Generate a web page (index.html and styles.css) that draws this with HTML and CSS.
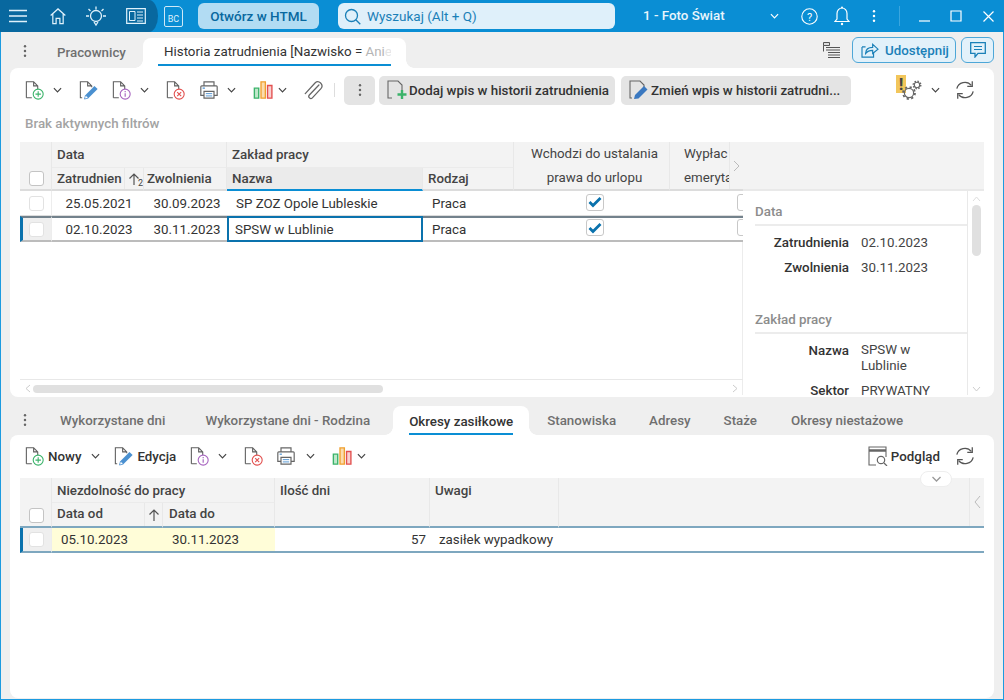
FILE: index.html
```html
<!DOCTYPE html>
<html lang="pl">
<head>
<meta charset="utf-8">
<title>Historia zatrudnienia</title>
<link rel="stylesheet" href="styles.css">
</head>
<body>
<svg class="defs" width="0" height="0">
  <symbol id="doc" viewBox="0 0 22 22"><path d="M1.500 19.500V2h8l4.500 4.500V10M9.500 2v4.500H14M1.500 19.500h6" fill="none" stroke="#5f5f5f" stroke-width="1.200"/></symbol>
  <symbol id="i-new" viewBox="0 0 22 22"><use href="#doc"/><circle cx="14.500" cy="15.500" r="5.500" fill="#fff" stroke="#3bb36a" stroke-width="1.200"/><path d="M14.500 12.500v6M11.500 15.500h6" stroke="#3bb36a" stroke-width="1.200"/></symbol>
  <symbol id="i-edit" viewBox="0 0 22 22"><path d="M3.500 19.500L1.500 19.500V2h8l4.500 4.500V8M9.500 2v4.500H14" fill="none" stroke="#5f5f5f" stroke-width="1.200"/><path d="M6 21l1.200-4.500L17 6.500l3.500 3.500-10 9.800z" fill="#4a90d0"/><path d="M6 21l1.200-4.500 3.200 3.300z" fill="#fff" stroke="#4a90d0" stroke-width=".8"/></symbol>
  <symbol id="i-info" viewBox="0 0 22 22"><use href="#doc"/><circle cx="14.500" cy="15.500" r="5.500" fill="#fff" stroke="#a866c0" stroke-width="1.200"/><path d="M14.500 14.500v4M14.500 12v1.400" stroke="#a866c0" stroke-width="1.300"/></symbol>
  <symbol id="i-del" viewBox="0 0 22 22"><use href="#doc"/><circle cx="14.500" cy="15.500" r="5.500" fill="#fff" stroke="#e2504f" stroke-width="1.200"/><path d="M12.300 13.300l4.400 4.400M16.700 13.300l-4.400 4.400" stroke="#e2504f" stroke-width="1.200"/></symbol>
  <symbol id="i-print" viewBox="0 0 22 22"><path d="M5.500 6.500V2h11v4.500M5.500 17H2V7.500q0-1 1-1h16q1 0 1 1V17h-3.500" fill="none" stroke="#666" stroke-width="1.300"/><path d="M5.500 12.500h11V20h-11z" fill="#fff" stroke="#666" stroke-width="1.300"/><path d="M7.500 15h7M7.500 17.500h7" stroke="#4a90d0"/><path d="M4 9h2.500" stroke="#4a90d0" stroke-width="1.300"/></symbol>
  <symbol id="i-chart" viewBox="0 0 22 22"><path d="M1.500 9h4.800v11H1.500z" fill="#bfe8cb" stroke="#3bb36a" stroke-width="1.500"/><path d="M8.800 2h4.800v18H8.800z" fill="#fbdcae" stroke="#f0a02f" stroke-width="1.500"/><path d="M16 6h4.800v14H16z" fill="#f9d0d0" stroke="#e2504f" stroke-width="1.500"/></symbol>
  <symbol id="i-clip" viewBox="0 0 22 22"><path d="M18 5L7.500 16a2.300 2.300 0 0 0 3.300 3.200L20.200 9a4.500 4.500 0 0 0-6.500-6.200L3 14.500" transform="translate(-.5 .5)" fill="none" stroke="#666" stroke-width="1.400" stroke-linecap="round"/></symbol>
  <symbol id="i-refresh" viewBox="0 0 22 22"><path d="M2 9.500A9 8.500 0 0 1 18 6M20 12.500A9 8.500 0 0 1 4 16" fill="none" stroke="#555" stroke-width="1.400"/><path d="M19 1.500V7h-5.500M3 20.500V15h5.500" fill="none" stroke="#555" stroke-width="1.400"/></symbol>
  <symbol id="i-chev" viewBox="0 0 10 6"><path d="M1 1l4 4 4-4" fill="none" stroke="currentColor" stroke-width="1.300"/></symbol>
  <symbol id="i-dots" viewBox="0 0 4 16"><circle cx="2" cy="2.500" r="1.400"/><circle cx="2" cy="8" r="1.400"/><circle cx="2" cy="13.500" r="1.400"/></symbol>
</svg>
<div class="window">
  <header class="titlebar">
    <div class="tb-dark">
      <svg class="tb-ico" width="18" height="14" viewBox="0 0 18 14"><path d="M0 1.500h18M0 7h18M0 12.500h18" stroke="#dff1fb" stroke-width="1.400"/></svg>
      <svg class="tb-ico" width="16" height="18" viewBox="0 0 17 18"><path d="M.7 8.500L8.500 1.500l7.800 7M3 7v10h3.500v-5.500h4V17H14V7" fill="none" stroke="#dff1fb" stroke-width="1.300"/></svg>
      <svg class="tb-ico" width="22" height="22" viewBox="0 0 22 22"><circle cx="11" cy="11" r="5.500" fill="none" stroke="#dff1fb" stroke-width="1.300"/><path d="M11 1.500v3M3.500 4l2 2M18.500 4l-2 2M1 11h3M18 11h3M9 17l2 3 2-3" fill="none" stroke="#dff1fb" stroke-width="1.300"/></svg>
      <svg class="tb-ico" width="20" height="16" viewBox="0 0 20 16"><path d="M.7.700h18.600v14.600H.7z" fill="none" stroke="#dff1fb" stroke-width="1.200"/><path d="M3.500 3.500h5.500v9H3.500z" fill="none" stroke="#dff1fb"/><path d="M11 4h6M11 7h6M11 10h6M11 13h6" stroke="#dff1fb"/></svg>
    </div>
    <div class="tb-bc">BC</div>
    <button class="html-btn">Otwórz w HTML</button>
    <div class="search">
      <svg width="17" height="17" viewBox="0 0 17 17"><circle cx="7.500" cy="7.500" r="6" fill="none" stroke="#1a80b8" stroke-width="1.300"/><path d="M11.800 11.800l4.500 4.500" stroke="#1a80b8" stroke-width="1.300"/></svg>
      <span>Wyszukaj (Alt + Q)</span>
    </div>
    <div class="company">1 - Foto Świat</div>
    <svg class="company-chev" width="9" height="6"><use href="#i-chev"/></svg>
    <div class="tb-right">
      <svg width="17" height="17" viewBox="0 0 17 17"><circle cx="8.500" cy="8.500" r="7.700" fill="none" stroke="#fff" stroke-width="1.100"/><text x="8.500" y="12.500" class="help-q" text-anchor="middle">?</text></svg>
      <svg width="16" height="20" viewBox="0 0 16 20"><path d="M1 15.500h14l-2-2.500V7.500a5 5.500 0 0 0-10 0V13z" fill="none" stroke="#fff" stroke-width="1.200"/><circle cx="8" cy="18" r="1.200" fill="#fff"/><circle cx="8" cy="1.500" r="1" fill="#fff"/></svg>
      <svg class="dots-white" width="4" height="14"><use href="#i-dots"/></svg>
      <span class="tb-sep"></span>
      <svg width="11" height="11" viewBox="0 0 11 11"><path d="M0 10h11" stroke="#fff" stroke-width="1.200"/></svg>
      <svg width="12" height="12" viewBox="0 0 12 12"><path d="M1 1h10v10H1z" fill="none" stroke="#fff" stroke-width="1.200"/></svg>
      <svg width="11" height="11" viewBox="0 0 11 11"><path d="M.5.500l10 10M10.500.500l-10 10" stroke="#fff" stroke-width="1.200"/></svg>
    </div>
  </header>

  <main class="workspace">
    <div class="tabs tabs-top">
      <svg class="dots" width="4" height="14"><use href="#i-dots"/></svg>
      <div class="tab t-prac">Pracownicy</div>
      <div class="tab tab-active t-hist"><span class="tab-label">Historia zatrudnienia [Nazwisko = <span class="fade">Ani</span><span class="fade2">e</span></span></div>
      <div class="tabs-right">
        <svg width="17" height="16" viewBox="0 0 17 16"><path d="M.5.500h6v3h-6zM.5 3.500v6" fill="#ddd" stroke="#555"/><path d="M3 5.500h14M3 8h14M5 10.500h12M5 13h12M5 15.500h12" stroke="#555"/></svg>
        <button class="share"><svg width="18" height="16" viewBox="0 0 20 18"><path d="M1 5.500h4M1 5.500V17h13v-5" fill="none" stroke="#1a80b8" stroke-width="1.300"/><path d="M5 13c0-5 3-7 8-7V2.500l6 5.500-6 5v-3.500c-4 0-6 1-8 3.500z" fill="none" stroke="#1a80b8" stroke-width="1.300"/></svg>Udostępnij</button>
        <button class="comment"><svg width="16" height="16" viewBox="0 0 16 16"><path d="M.7.700h14.600v10.600H8L5 15v-3.700H.7z" fill="none" stroke="#1a80b8" stroke-width="1.300"/><path d="M4 4.500h8M4 7.500h8" stroke="#1a80b8"/></svg></button>
      </div>
    </div>

    <section class="card card-top">
      <div class="toolbar tb1">
        <svg class="i22"><use href="#i-new"/></svg><svg class="chev"><use href="#i-chev"/></svg>
        <svg class="i22 a-edit"><use href="#i-edit"/></svg>
        <svg class="i22 a-info"><use href="#i-info"/></svg><svg class="chev"><use href="#i-chev"/></svg>
        <svg class="i22 a-del"><use href="#i-del"/></svg>
        <svg class="i22 a-print"><use href="#i-print"/></svg><svg class="chev"><use href="#i-chev"/></svg>
        <svg class="i22 a-chart"><use href="#i-chart"/></svg><svg class="chev ch-tight"><use href="#i-chev"/></svg>
        <svg class="i22 a-clip"><use href="#i-clip"/></svg>
        <span class="tool-sep"></span>
        <button class="more"><svg class="dots" width="4" height="14"><use href="#i-dots"/></svg></button>
        <button class="action a-add"><svg width="20" height="20" viewBox="0 0 20 20"><path d="M5 18H1V1h10l4 4v5" fill="none" stroke="#666" stroke-width="1.100"/><path d="M15 10v9M10.500 14.500h9" stroke="#3bb36a" stroke-width="2.400"/></svg>Dodaj wpis w historii zatrudnienia</button>
        <button class="action a-chg"><svg width="20" height="20" viewBox="0 0 20 20"><path d="M3 18H1V1h10l4 4v2" fill="none" stroke="#666" stroke-width="1.100"/><path d="M5 19l1-4 9-9 3.500 3.500-9 9z" fill="#3a78c0"/></svg>Zmień wpis w historii zatrudni...</button>
        <div class="tool-end">
          <span class="warn"><b>!</b></span>
          <svg class="gears" width="22" height="22" viewBox="0 0 22 22"><circle cx="8" cy="13" r="4.600" fill="none" stroke="#666" stroke-width="1.200"/><circle cx="8" cy="13" r="6" fill="none" stroke="#666" stroke-width="1.800" stroke-dasharray="2.200 2.500"/><circle cx="16" cy="5" r="2.700" fill="none" stroke="#666" stroke-width="1.100"/><circle cx="16" cy="5" r="3.800" fill="none" stroke="#666" stroke-width="1.400" stroke-dasharray="1.500 1.480"/></svg>
          <svg class="chev ch-end"><use href="#i-chev"/></svg>
          <svg class="i22 refresh"><use href="#i-refresh"/></svg>
        </div>
      </div>
      <div class="filters">Brak aktywnych filtrów</div>
      <div class="split">
        <div class="grid-wrap">
          <div class="grid g1">
            <div class="gh gh-check r12"><span class="cb"></span></div>
            <div class="gh gh-group c-data">Data</div>
            <div class="gh gh-group c-zak">Zakład pracy</div>
            <div class="gh gh-multi c-wch">Wchodzi do ustalania<br>prawa do urlopu</div>
            <div class="gh gh-multi c-wyp"><span class="clip">Wypłac<br>emeryta</span><span class="next-cell"><svg width="7" height="12" viewBox="0 0 7 12"><path d="M1 1l5 5-5 5" fill="none" stroke="#bbb"/></svg></span></div>
            <div class="gh gh-sub c-zat"><span class="clipw">Zatrudnien</span><span class="sort"><svg width="12" height="14" viewBox="0 0 12 14"><path d="M6 13V2M1.500 6.500L6 2l4.500 4.500" fill="none" stroke="#555" stroke-width="1.200"/></svg><sub>2</sub></span></div>
            <div class="gh gh-sub c-zwo">Zwolnienia</div>
            <div class="gh gh-sub gh-sorted c-naz">Nazwa</div>
            <div class="gh gh-sub c-rod">Rodzaj</div>

            <div class="row row-first">
              <div class="gc gc-check"><span class="cb cb-light"></span></div>
              <div class="gc ctr d1">25.05.2021</div>
              <div class="gc ctr d2">30.09.2023</div>
              <div class="gc pad">SP ZOZ Opole Lubleskie</div>
              <div class="gc pad">Praca</div>
              <div class="gc ctr"><span class="cbx"><svg width="14" height="12" viewBox="0 0 14 12"><path d="M1.500 6l3.500 3.500L12.500 2" fill="none" stroke="#0a72ad" stroke-width="2.800"/></svg></span></div>
              <div class="gc"><span class="cbx cbx-cut"></span></div>
            </div>
            <div class="row row-sel">
              <div class="gc gc-check gc-mark"><span class="cb cb-light"></span></div>
              <div class="gc ctr d1">02.10.2023</div>
              <div class="gc ctr d2">30.11.2023</div>
              <div class="gc pad gc-focus">SPSW w Lublinie</div>
              <div class="gc pad">Praca</div>
              <div class="gc ctr"><span class="cbx"><svg width="14" height="12" viewBox="0 0 14 12"><path d="M1.500 6l3.500 3.500L12.500 2" fill="none" stroke="#0a72ad" stroke-width="2.800"/></svg></span></div>
              <div class="gc"><span class="cbx cbx-cut"></span></div>
            </div>
          </div>
          <div class="hscroll"><svg width="6" height="9" viewBox="0 0 6 9"><path d="M5 1L1 4.500 5 8" fill="none" stroke="#ccc"/></svg><span class="hthumb"></span><svg class="hnext" width="6" height="9" viewBox="0 0 6 9"><path d="M1 1l4 3.500L1 8" fill="none" stroke="#ccc"/></svg></div>
        </div>
        <aside class="details">
          <div class="details-head"></div>
          <div class="details-body">
            <div class="det-inner">
              <h3 class="det-title">Data</h3>
              <dl class="det-list">
                <dt>Zatrudnienia</dt><dd>02.10.2023</dd>
                <dt>Zwolnienia</dt><dd>30.11.2023</dd>
              </dl>
              <h3 class="det-title det-second">Zakład pracy</h3>
              <dl class="det-list">
                <dt>Nazwa</dt><dd class="dd-wrap">SPSW w Lublinie</dd>
                <dt>Sektor</dt><dd>PRYWATNY</dd>
              </dl>
            </div>
            <div class="vscroll"><svg width="9" height="6" viewBox="0 0 9 6"><path d="M1 5l3.500-4L8 5" fill="none" stroke="#ddd"/></svg><span class="vthumb"></span><svg class="vdown" width="9" height="6" viewBox="0 0 9 6"><path d="M1 1l3.500 4L8 1" fill="none" stroke="#ccc"/></svg></div>
          </div>
        </aside>
      </div>
    </section>

    <div class="tabs tabs-bottom">
      <svg class="dots" width="4" height="14"><use href="#i-dots"/></svg>
      <div class="tab2 t1">Wykorzystane dni</div>
      <div class="tab2 t2">Wykorzystane dni - Rodzina</div>
      <div class="tab2 tab2-active"><span class="tab2-label">Okresy zasiłkowe</span></div>
      <div class="tab2 t4">Stanowiska</div>
      <div class="tab2 t5">Adresy</div>
      <div class="tab2 t6">Staże</div>
      <div class="tab2 t7">Okresy niestażowe</div>
    </div>

    <section class="card card-bottom">
      <div class="toolbar tb2">
        <svg class="i22"><use href="#i-new"/></svg><span class="tl">Nowy</span><svg class="chev b-c1"><use href="#i-chev"/></svg>
        <svg class="i22 b-edit"><use href="#i-edit"/></svg><span class="tl">Edycja</span>
        <svg class="i22 b-info"><use href="#i-info"/></svg><svg class="chev"><use href="#i-chev"/></svg>
        <svg class="i22 b-del"><use href="#i-del"/></svg>
        <svg class="i22 b-print"><use href="#i-print"/></svg><svg class="chev b-c2"><use href="#i-chev"/></svg>
        <svg class="i22 b-chart"><use href="#i-chart"/></svg><svg class="chev b-c3"><use href="#i-chev"/></svg>
        <div class="tool-end tool-end2">
          <svg width="20" height="20" viewBox="0 0 20 20"><path d="M8 19H1V1h17v10" fill="none" stroke="#666" stroke-width="1.100"/><path d="M1 4.500h17" stroke="#666" stroke-width="2.500"/><circle cx="13" cy="14" r="3.700" fill="none" stroke="#666" stroke-width="1.200"/><path d="M16 17l3 3" stroke="#666" stroke-width="1.200"/></svg>
          <span class="tl">Podgląd</span>
          <svg class="i22 refresh2"><use href="#i-refresh"/></svg>
        </div>
      </div>
      <div class="grid2-wrap">
        <span class="collapse"><svg width="11" height="6"><use href="#i-chev"/></svg></span>
        <div class="grid g2">
          <div class="gh gh-check g2-check"><span class="cb"></span></div>
          <div class="gh gh-group g2-nz">Niezdolność do pracy</div>
          <div class="gh g2-il">Ilość dni</div>
          <div class="gh g2-uw">Uwagi</div>
          <div class="gh g2-rest"><span class="prev-cell"><svg width="7" height="14" viewBox="0 0 7 14"><path d="M6 1L1 7l5 6" fill="none" stroke="#bbb"/></svg></span></div>
          <div class="gh gh-sub c-od"><span>Data od</span><span class="sort sort2"><svg width="12" height="14" viewBox="0 0 12 14"><path d="M6 13V2M1.500 6.500L6 2l4.500 4.500" fill="none" stroke="#555" stroke-width="1.200"/></svg></span></div>
          <div class="gh gh-sub c-do">Data do</div>
          <div class="row row-sel row-g2">
            <div class="gc gc-check gc-mark"><span class="cb cb-light"></span></div>
            <div class="gc hl pad-od">05.10.2023</div>
            <div class="gc hl pad-do">30.11.2023</div>
            <div class="gc num">57</div>
            <div class="gc pad-uw">zasiłek wypadkowy</div>
            <div class="gc"></div>
          </div>
        </div>
      </div>
    </section>
  </main>
</div>
</body>
</html>
```

FILE: styles.css
```css
* { box-sizing: border-box; }
html, body { margin: 0; height: 100%; }
body { font-family: Roboto, "Liberation Sans", sans-serif; font-size: 13.33px; color: #333; overflow: hidden; background: #fff; }
.defs { position: absolute; }
button { font: inherit; border: 0; padding: 0; background: none; color: inherit; }
svg { display: block; flex: none; }

.window { width: 1004px; height: 700px; display: flex; flex-direction: column; border: 1px solid #1c9be0; border-top: 0; }

/* title bar */
.titlebar { height: 32px; margin: 0 -1px; background: #0a8ed4; display: flex; align-items: center; flex: none; color: #fff; }
.tb-dark { width: 158px; height: 32px; background: #08689f; border-radius: 0 18px 18px 0 / 0 32px 32px 0; display: flex; align-items: center; padding-left: 9px; flex: none; }
.tb-dark svg:nth-child(2) { margin-left: 23px; }
.tb-dark svg:nth-child(3) { margin-left: 19px; }
.tb-dark svg:nth-child(4) { margin-left: 19px; }
.tb-bc { margin-left: 6px; width: 19px; height: 21px; border: 1px solid #cfe9f7; border-radius: 2px 5px 2px 2px; font-size: 9px; display: flex; align-items: flex-end; justify-content: center; padding-bottom: 2px; color: #dff1fb; }
.html-btn { margin-left: 15px; width: 121px; height: 26px; background: #b2dcf3; color: #08689f; border-radius: 6px; font-size: 13.5px; font-weight: 500; }
.search { margin-left: 19px; width: 277px; height: 26px; background: #dff0fa; border-radius: 6px; display: flex; align-items: center; padding-left: 6px; gap: 6px; color: #1a80b8; font-size: 13.5px; }
.company { margin-left: 28px; font-size: 13.33px; font-weight: 500; color: #e8f5fc; width: 122px; margin-top: -2px; }
.company-chev { color: #fff; width: 9px; height: 6px; margin-left: 5px; }
.tb-right { margin-left: 22px; display: flex; align-items: center; }
.tb-right svg:nth-child(2) { margin-left: 16px; }
.tb-right svg:nth-child(3) { margin-left: 22px; fill: #fff; }
.help-q { font-size: 11px; fill: #fff; font-family: Roboto, sans-serif; }
.tb-sep { width: 1px; height: 20px; background: #3aa6df; margin-left: 23px; }
.tb-right svg:nth-child(5) { margin-left: 19px; }
.tb-right svg:nth-child(6) { margin-left: 20px; }
.tb-right svg:nth-child(7) { margin-left: 21px; }

/* workspace */
.workspace { flex: 1; min-height: 0; display: flex; flex-direction: column; background: #efefef; padding: 0 9px 1px; }
.tabs { flex: none; display: flex; position: relative; }
.tabs-top { height: 36px; align-items: stretch; }
.dots { fill: #666; }
.tabs-top > .dots { margin: 12px 0 0 13px; }
.tab { display: flex; align-items: center; }
.t-prac { color: #6f6f6f; margin-left: 30px; width: 86px; padding-top: 4px; font-weight: 500; }
.tab-active { background: #fff; margin-top: 6px; border-radius: 8px 8px 0 0; width: 263px; padding-left: 15px; position: relative; color: #333; height: 30px; }
.tab-active::before, .tab2-active::before { content: ""; position: absolute; left: -8px; bottom: 0; width: 8px; height: 8px; background: radial-gradient(circle at 0 0, transparent 7.5px, #fff 8px); }
.tab-active::after, .tab2-active::after { content: ""; position: absolute; right: -8px; bottom: 0; width: 8px; height: 8px; background: radial-gradient(circle at 100% 0, transparent 7.5px, #fff 8px); }
.tab-label { border-bottom: 2px solid #0a8ed4; height: 24px; line-height: 20px; width: 233px; padding-left: 6px; white-space: nowrap; overflow: hidden; margin-top: 2px; }
.fade { color: #b5b5b5; }
.fade2 { color: #e5e5e5; }
.tabs-right { margin-left: auto; display: flex; align-items: center; }
.tabs-right > svg { margin-right: 12px; margin-top: -1px; }
.share { width: 104px; height: 26px; border: 1px solid #4da7d8; border-radius: 6px; background: #e2f1fa; display: flex; align-items: center; gap: 6px; padding-left: 8px; color: #1a80b8; margin-right: 5px; font-weight: 500; }
.comment { width: 33px; height: 26px; border: 1px solid #4da7d8; border-radius: 6px; background: #e2f1fa; display: flex; align-items: center; justify-content: center; }

.card { background: #fff; flex: none; }
.card-top { height: 329px; border-radius: 8px; display: flex; flex-direction: column; overflow: hidden; }
.card-bottom { flex: 1; border-radius: 8px; }

/* toolbars */
.toolbar { display: flex; align-items: center; height: 44px; padding-left: 15px; position: relative; }
.i22 { width: 20px; height: 20px; }
.chev { width: 9px; height: 6px; margin-left: 8px; color: #444; }
.ch-tight { margin-left: 5px; }
.a-edit { margin-left: 17px; }
.a-info { margin-left: 13px; }
.a-del { margin-left: 17px; }
.a-print { margin-left: 13px; }
.a-chart { margin-left: 17px; }
.a-clip { margin-left: 16px; }
.tool-sep { width: 1px; height: 14px; background: #ddd; margin-left: 11px; }
.more { width: 31px; height: 29px; background: #e4e4e4; border-radius: 5px; margin-left: 9px; display: flex; align-items: center; justify-content: center; }
.action { height: 29px; background: #e4e4e4; border-radius: 5px; display: flex; align-items: center; font-size: 13.33px; font-weight: 500; color: #333; white-space: nowrap; gap: 2px; padding-left: 8px; }
.a-add { width: 236px; margin-left: 4px; }
.a-chg { width: 230px; margin-left: 6px; }
.tool-end { margin-left: auto; display: flex; align-items: center; position: relative; padding-right: 19px; }
.warn { width: 10px; height: 18px; background: #f2c65b; display: flex; justify-content: center; align-items: center; color: #444; font-size: 17px; margin-top: -12px; }
.warn b { font-weight: 700; }
.gears { margin-left: -5px; margin-top: 1px; }
.ch-end { margin-left: 8px; }
.refresh { margin-left: 15px; }
.filters { height: 28px; padding: 4px 0 0 15px; color: #a3a3a3; font-weight: 500; flex: none; line-height: 16px; }

.split { display: flex; height: 253px; padding-left: 10px; margin-top: 2px; flex: none; }
.grid-wrap { width: 723px; flex: none; position: relative; height: 253px; }

/* grid */
.grid { display: grid; overflow: hidden; }
.g1 { grid-template-columns: 32px 92px 83px 196px 91px 156px 73px; grid-template-rows: 26px 23px 25px 26px; width: 723px; }
.gh { background: #f3f3f3; border-right: 1px solid #e8e8e8; color: #444; display: flex; align-items: center; font-weight: 500; white-space: nowrap; overflow: hidden; }
.gh-check { grid-row: 1 / span 2; grid-column: 1; align-items: flex-end; padding: 0 0 3px 9px; }
.r12 { border-bottom: 2px solid #dcdcdc; }
.cb { width: 15px; height: 15px; border: 1px solid #c4c4c4; border-radius: 3px; background: #fff; display: block; }
.cb-light { border-color: #e2e2e2; background: #fff; }
.gh-group { padding-left: 5px; border-bottom: 1px solid #ebebeb; }
.c-data { grid-column: 2 / span 2; grid-row: 1; }
.c-zak { grid-column: 4 / span 2; grid-row: 1; }
.c-wch { grid-column: 6; grid-row: 1 / span 2; }
.c-wyp { grid-column: 7; grid-row: 1 / span 2; }
.c-zat { grid-column: 2; grid-row: 2; }
.c-zwo { grid-column: 3; grid-row: 2; }
.c-naz { grid-column: 4; grid-row: 2; }
.c-rod { grid-column: 5; grid-row: 2; }
.gh-multi { justify-content: center; text-align: center; line-height: 23.5px; border-bottom: 2px solid #dcdcdc; font-weight: 400; }
.c-wch { padding-left: 6px; }
.c-wyp { justify-content: flex-start; border-right: 0; }
.clip { width: 59px; flex: none; overflow: hidden; padding-left: 14px; white-space: nowrap; text-align: left; }
.next-cell { width: 14px; height: 100%; border-left: 1px solid #e8e8e8; display: flex; align-items: center; justify-content: center; }
.gh-sub { padding-left: 5px; border-bottom: 2px solid #dcdcdc; }
.g1 .c-zwo { padding-left: 3px; }
.c-zat { padding: 0 0 0 5px; position: relative; }
.clipw { width: 66px; overflow: hidden; display: block; flex: none; }
.sort { width: 20px; height: 100%; border-left: 1px solid #e8e8e8; position: relative; display: flex; align-items: center; padding-left: 3px; margin-left: 1px; }
.sort sub { position: absolute; left: 13px; top: 10px; font-size: 9px; font-weight: 400; }
.gh-sorted { border-bottom: 2px solid #0a8ed4; background: #ebebeb; }

.row { display: contents; }
.gc { background: #fff; border-bottom: 1px solid #dcdcdc; display: flex; align-items: center; white-space: nowrap; overflow: hidden; color: #333; }
.row-first .gc { padding-top: 1px; }
.gc-check { padding-left: 9px; border-right: 1px solid #ededed; }
.ctr { justify-content: center; }
.d1 { padding-left: 2px; }
.d2 { padding-left: 3px; }
.pad { padding-left: 9px; }
.cbx { width: 18px; height: 17px; border: 1px solid #c8c8c8; border-radius: 3px; background: #fff; display: flex; align-items: center; justify-content: center; margin: -3px 0 0 6px; }
.cbx-cut { margin-left: 67px; flex: none; }
.row-sel .gc { border-top: 2px solid #73828c; border-bottom: 2px solid #bcbcbc; }
.row-sel .gc-mark { border-left: 3px solid #0a72ad; background: #efefef; padding-left: 6px; }
.row-sel .gc-focus { border: 2px solid #0a72ad; padding-left: 6px; }

.hscroll { position: absolute; left: 0; right: 0; top: 237px; height: 16px; border-top: 1px solid #e8e8e8; display: flex; align-items: center; gap: 2px; padding: 2px 0 0 5px; }
.hthumb { width: 350px; height: 8px; background: #e0e0e0; border-radius: 4px; }
.hnext { margin-left: auto; margin-right: 5px; }

.details { width: 242px; flex: none; height: 253px; display: flex; flex-direction: column; border-left: 1px solid #ececec; margin-left: -1px; }
.details-head { height: 49px; background: #f3f3f3; border-bottom: 2px solid #e9e9e9; flex: none; }
.details-body { flex: 1; display: flex; min-height: 0; }
.det-inner { width: 225px; padding: 10px 0 0 12px; overflow: hidden; border-right: 1px solid #e9e9e9; }
.det-title { margin: 0; font-size: 13.33px; font-weight: 500; color: #8c8c8c; height: 25px; border-bottom: 2px solid #ececec; padding-top: 3px; line-height: 15px; }
.det-second { margin-top: 25px; }
.det-list { display: grid; grid-template-columns: 94px 90px; column-gap: 12px; margin: 0; padding-top: 8px; line-height: 17px; }
.det-list dt { text-align: right; font-weight: 500; color: #333; margin-bottom: 8px; }
.det-list dd { margin: 0 0 8px; color: #444; white-space: nowrap; }
.det-list .dd-wrap { width: 70px; line-height: 16px; white-space: normal; }
.vscroll { width: 16px; display: flex; flex-direction: column; align-items: center; padding-top: 5px; }
.vthumb { width: 9px; height: 51px; border-radius: 5px; background: #e0e0e0; margin-top: 3px; }
.vdown { margin-top: auto; margin-bottom: 3px; }

/* bottom tabs */
.tabs-bottom { height: 38px; align-items: flex-end; }
.tabs-bottom > .dots { margin: 0 0 8px 13px; }
.tab2 { color: #6f6f6f; font-weight: 500; height: 29px; display: flex; align-items: center; white-space: nowrap; }
.t1 { margin-left: 33px; }
.t2 { margin-left: 40px; }
.tab2-active { color: #333; margin-left: 23px; background: #fff; border-radius: 8px 8px 0 0; padding: 0 16px; position: relative; width: 136px; }
.tab2-label { line-height: 29px; border-bottom: 2px solid #0a8ed4; display: block; height: 28px; }
.t4 { margin-left: 18px; }
.t5 { margin-left: 33px; }
.t6 { margin-left: 33px; }
.t7 { margin-left: 34px; }

.tb2 { height: 42px; }
.tl { font-weight: 500; color: #333; margin-left: 3px; }
.b-c1 { margin-left: 10px; }
.b-edit { margin-left: 14px; }
.b-info { margin-left: 14px; }
.b-del { margin-left: 17px; }
.b-print { margin-left: 12px; }
.b-c2 { margin-left: 10px; }
.b-chart { margin-left: 17px; }
.b-c3 { margin-left: 5px; }
.tool-end2 { padding-right: 19px; }
.refresh2 { margin-left: 15px; }

.grid2-wrap { position: relative; margin: 1px 10px 0 10px; }
.g2 { grid-template-columns: 32px 111px 112px 155px 129px 1fr; grid-template-rows: 25px 25px 25px; }
.collapse { position: absolute; right: 32px; top: -7px; width: 32px; height: 16px; background: #fff; border: 1px solid #eee; border-radius: 8px; color: #999; display: flex; align-items: center; justify-content: center; z-index: 2; }
.g2-check { grid-column: 1; grid-row: 1 / span 2; }
.g2-nz { grid-column: 2 / span 2; grid-row: 1; }
.g2-il { grid-column: 4; grid-row: 1 / span 2; align-items: flex-start; padding: 5px 0 0 5px; }
.g2-uw { grid-column: 5; grid-row: 1 / span 2; align-items: flex-start; padding: 5px 0 0 5px; }
.g2-rest { grid-column: 6; grid-row: 1 / span 2; border-right: 0; justify-content: flex-end; }
.prev-cell { width: 15px; height: 100%; border-left: 1px solid #e8e8e8; display: flex; align-items: center; justify-content: center; }
.g2-check, .g2-il, .g2-uw, .g2-rest, .g2 .gh-sub { border-bottom: 2px solid #7ea7bf; }
.c-od { grid-column: 2; grid-row: 2; padding-right: 0; justify-content: space-between; }
.c-od > span:first-child, .c-do { padding-bottom: 2px; }
.c-do { grid-column: 3; grid-row: 2; }
.g2 .c-do { padding-left: 6px; }
.sort2 { margin: 0; width: 18px; padding-left: 3px; }
.row-g2 .gc { border-top: 0; border-bottom: 2px solid #7ea7bf; }
.row-g2 .gc-mark { border-left: 3px solid #0a72ad; }
.row-g2 .hl { background: #fffdd8; }
.pad-od { padding-left: 9px; }
.pad-do { padding-left: 9px; }
.num { justify-content: flex-end; padding-right: 4px; }
.pad-uw { padding-left: 9px; }
```
